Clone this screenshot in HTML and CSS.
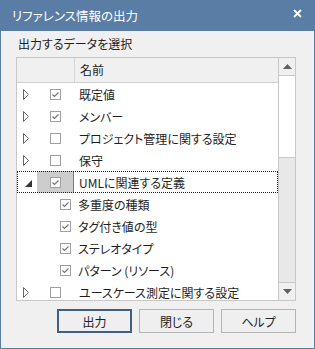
FILE: index.html
```html
<!DOCTYPE html>
<html lang="ja">
<head>
    <meta charset="UTF-8">
    <title>リファレンス情報の出力</title>
    <link rel="stylesheet" href="styles.css">
</head>
<body>
    <div class="window">
        <div class="titlebar">
            <span>リファレンス情報の出力</span>
            <svg class="close" width="9" height="9" viewBox="0 0 9 9">
                <path d="M1 1 L8 8 M8 1 L1 8" stroke="#fff" stroke-width="1.8"/>
            </svg>
        </div>
        <div class="content">
            <div class="caption">出力するデータを選択</div>
            <div class="list">
                <div class="tree">
                    <div class="head">
                        <div class="head-cell"></div>
                        <div class="head-name">名前</div>
                    </div>
                    <div class="row">
                        <div class="exp"><svg width="6" height="11"><polygon points="0.5,0.5 5.5,5.5 0.5,10.5" fill="#fff" stroke="#666"/></svg></div>
                        <div class="cell"><svg class="cb" width="11" height="11"><rect x="0.5" y="0.5" width="10" height="10" fill="#fff" stroke="#a0a0a0"/><path d="M2.5 5.5 L4.5 7.5 L8.5 3.5" fill="none" stroke="#777" stroke-width="1.2"/></svg></div>
                        <div class="label">既定値</div>
                    </div>
                    <div class="row">
                        <div class="exp"><svg width="6" height="11"><polygon points="0.5,0.5 5.5,5.5 0.5,10.5" fill="#fff" stroke="#666"/></svg></div>
                        <div class="cell"><svg class="cb" width="11" height="11"><rect x="0.5" y="0.5" width="10" height="10" fill="#fff" stroke="#a0a0a0"/><path d="M2.5 5.5 L4.5 7.5 L8.5 3.5" fill="none" stroke="#777" stroke-width="1.2"/></svg></div>
                        <div class="label">メンバー</div>
                    </div>
                    <div class="row">
                        <div class="exp"><svg width="6" height="11"><polygon points="0.5,0.5 5.5,5.5 0.5,10.5" fill="#fff" stroke="#666"/></svg></div>
                        <div class="cell"><svg class="cb" width="11" height="11"><rect x="0.5" y="0.5" width="10" height="10" fill="#fff" stroke="#a0a0a0"/></svg></div>
                        <div class="label">プロジェクト管理に関する設定</div>
                    </div>
                    <div class="row">
                        <div class="exp"><svg width="6" height="11"><polygon points="0.5,0.5 5.5,5.5 0.5,10.5" fill="#fff" stroke="#666"/></svg></div>
                        <div class="cell"><svg class="cb" width="11" height="11"><rect x="0.5" y="0.5" width="10" height="10" fill="#fff" stroke="#a0a0a0"/></svg></div>
                        <div class="label">保守</div>
                    </div>
                    <div class="row sel">
                        <div class="exp open"><svg width="7" height="7"><polygon points="7,0 7,7 0,7" fill="#333"/></svg></div>
                        <div class="cell"><svg class="cb" width="11" height="11"><rect x="0.5" y="0.5" width="10" height="10" fill="#fff" stroke="#a0a0a0"/><path d="M2.5 5.5 L4.5 7.5 L8.5 3.5" fill="none" stroke="#777" stroke-width="1.2"/></svg></div>
                        <div class="label">UMLに関連する定義</div>
                    </div>
                    <div class="row child">
                        <div class="exp"></div>
                        <div class="cell"><svg class="cb" width="11" height="11"><rect x="0.5" y="0.5" width="10" height="10" fill="#fff" stroke="#a0a0a0"/><path d="M2.5 5.5 L4.5 7.5 L8.5 3.5" fill="none" stroke="#777" stroke-width="1.2"/></svg></div>
                        <div class="label">多重度の種類</div>
                    </div>
                    <div class="row child">
                        <div class="exp"></div>
                        <div class="cell"><svg class="cb" width="11" height="11"><rect x="0.5" y="0.5" width="10" height="10" fill="#fff" stroke="#a0a0a0"/><path d="M2.5 5.5 L4.5 7.5 L8.5 3.5" fill="none" stroke="#777" stroke-width="1.2"/></svg></div>
                        <div class="label">タグ付き値の型</div>
                    </div>
                    <div class="row child">
                        <div class="exp"></div>
                        <div class="cell"><svg class="cb" width="11" height="11"><rect x="0.5" y="0.5" width="10" height="10" fill="#fff" stroke="#a0a0a0"/><path d="M2.5 5.5 L4.5 7.5 L8.5 3.5" fill="none" stroke="#777" stroke-width="1.2"/></svg></div>
                        <div class="label">ステレオタイプ</div>
                    </div>
                    <div class="row child">
                        <div class="exp"></div>
                        <div class="cell"><svg class="cb" width="11" height="11"><rect x="0.5" y="0.5" width="10" height="10" fill="#fff" stroke="#a0a0a0"/><path d="M2.5 5.5 L4.5 7.5 L8.5 3.5" fill="none" stroke="#777" stroke-width="1.2"/></svg></div>
                        <div class="label">パターン (リソース)</div>
                    </div>
                    <div class="row">
                        <div class="exp"><svg width="6" height="11"><polygon points="0.5,0.5 5.5,5.5 0.5,10.5" fill="#fff" stroke="#666"/></svg></div>
                        <div class="cell"><svg class="cb" width="11" height="11"><rect x="0.5" y="0.5" width="10" height="10" fill="#fff" stroke="#a0a0a0"/></svg></div>
                        <div class="label">ユースケース測定に関する設定</div>
                    </div>
                </div>
                <div class="scroll">
                    <div class="arrow up"><svg width="9" height="5"><polygon points="0,5 4.5,0 9,5" fill="#606060"/></svg></div>
                    <div class="thumb"></div>
                    <div class="track"></div>
                    <div class="arrow down"><svg width="9" height="5"><polygon points="0,0 4.5,5 9,0" fill="#606060"/></svg></div>
                </div>
            </div>
            <div class="buttons">
                <button class="btn default">出力</button>
                <button class="btn">閉じる</button>
                <button class="btn">ヘルプ</button>
            </div>
        </div>
    </div>
</body>
</html>
```

FILE: styles.css
```css
body {
    margin: 0;
    background: #f0f0f0;
}
.window {
    width: 315px;
    height: 349px;
    box-sizing: border-box;
    border: 1px solid #5a7da6;
    border-top: 0;
    background: #f0f0f0;
    font-family: "Noto Sans CJK JP", sans-serif;
    font-size: 12px;
    font-feature-settings: "palt";
    color: #1e1e1e;
}
.titlebar {
    height: 31px;
    background: #5a7da6;
    color: #fff;
    display: flex;
    align-items: center;
    justify-content: space-between;
    padding: 0 12px 0 11px;
    font-size: 12.5px;
}
.close {
    margin-top: -5px;
}
.content {
    padding: 0 17px 0 15px;
}
.caption {
    padding: 6px 0 0 2px;
    line-height: 14px;
    height: 14px;
}
.list {
    margin-top: 6px;
    height: 244px;
    width: 280px;
    box-sizing: border-box;
    border: 1px solid #c8c8c8;
    background: #fff;
    display: flex;
    overflow: hidden;
}
.tree {
    flex: 1;
    overflow: hidden;
}
.head {
    height: 24px;
    border-bottom: 1px solid #d0d0d0;
    background: #f0f0f0;
    display: flex;
}
.head-cell {
    width: 57px;
    border-right: 1px solid #d5d5d5;
}
.head-name {
    padding-left: 5px;
    line-height: 24px;
}
.row {
    height: 22px;
    display: flex;
    align-items: center;
}
.exp {
    width: 20px;
    height: 22px;
    box-sizing: border-box;
    padding-left: 6px;
    display: flex;
    align-items: center;
}
.exp.open {
    padding-left: 8px;
    padding-top: 2px;
}
.cell {
    width: 37px;
    height: 22px;
    box-sizing: border-box;
    padding-left: 13px;
    display: flex;
    align-items: center;
}
.label {
    padding-left: 5px;
    white-space: nowrap;
}
.child .cell {
    width: 41px;
    padding-left: 23px;
}
.child .label {
    padding-left: 0;
}
.sel {
    outline: 1px dotted #222;
    outline-offset: -1px;
}
.sel .cell {
    background: #cdcdcd;
    border-right: 1px solid #7a7a7a;
}
.scroll {
    width: 16px;
    border-left: 1px solid #c8c8c8;
    display: flex;
    flex-direction: column;
}
.arrow {
    height: 17px;
    background: #f0f0f0;
    display: flex;
    align-items: center;
    justify-content: center;
}
.arrow.up {
    border-bottom: 1px solid #c8c8c8;
}
.arrow.down {
    border-top: 1px solid #c8c8c8;
}
.thumb {
    height: 81px;
    background: #fff;
    border-bottom: 1px solid #c8c8c8;
}
.track {
    flex: 1;
    background: #e8e8e8;
}
.buttons {
    margin-top: 8px;
    margin-right: 1px;
    display: flex;
    justify-content: flex-end;
    gap: 7px;
}
.btn {
    width: 75px;
    height: 24px;
    box-sizing: border-box;
    background: #efefef;
    border: 1px solid #b4b4b4;
    font-family: "Noto Sans CJK JP", sans-serif;
    font-size: 12px;
    font-feature-settings: "palt";
    color: #222;
    padding: 0;
}
.btn.default {
    border: 2px solid #3f5f85;
}
```
